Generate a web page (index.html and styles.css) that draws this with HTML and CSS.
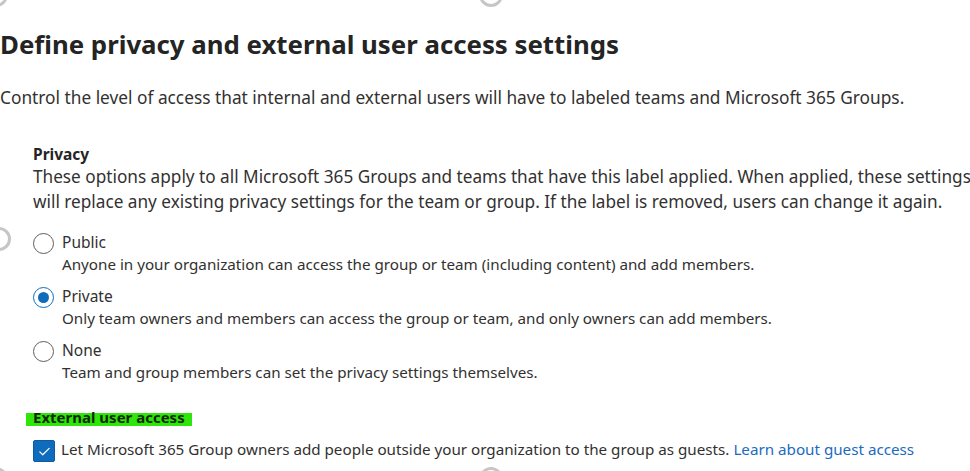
FILE: index.html
```html
<!DOCTYPE html>
<html lang="en">
<head>
<meta charset="utf-8">
<title>Define privacy and external user access settings</title>
<link rel="stylesheet" href="styles.css">
</head>
<body>
<div class="page">
  <span class="ring ring-top-left"></span>
  <span class="ring ring-top-mid"></span>
  <span class="ring ring-side"></span>
  <span class="ring ring-bottom-left"></span>
  <span class="ring ring-bottom-mid"></span>

  <h1 class="title">Define privacy and external user access settings</h1>
  <p class="intro">Control the level of access that internal and external users will have to labeled teams and Microsoft 365 Groups.</p>

  <section class="section">
    <h2 class="section-title">Privacy</h2>
    <p class="section-text">These options apply to all Microsoft 365 Groups and teams that have this label applied. When applied, these settings will replace any existing privacy settings for the team or group. If the label is removed, users can change it again.</p>

    <div class="options">
      <div class="option">
        <span class="radio"></span>
        <div class="option-body">
          <div class="option-label">Public</div>
          <div class="option-desc">Anyone in your organization can access the group or team (including content) and add members.</div>
        </div>
      </div>
      <div class="option">
        <span class="radio checked"></span>
        <div class="option-body">
          <div class="option-label">Private</div>
          <div class="option-desc">Only team owners and members can access the group or team, and only owners can add members.</div>
        </div>
      </div>
      <div class="option">
        <span class="radio"></span>
        <div class="option-body">
          <div class="option-label">None</div>
          <div class="option-desc">Team and group members can set the privacy settings themselves.</div>
        </div>
      </div>
    </div>

    <h2 class="section-title highlight">External user access</h2>
    <div class="check-row">
      <span class="checkbox">
        <svg viewBox="0 0 16 16" width="15" height="15"><path d="M3 8.4l3.1 3.1L13 4.6" fill="none" stroke="#fff" stroke-width="1.3" stroke-linecap="round" stroke-linejoin="round"/></svg>
      </span>
      <span class="check-text">Let Microsoft 365 Group owners add people outside your organization to the group as guests. <a class="link" href="#">Learn about guest access</a></span>
    </div>
  </section>
</div>
</body>
</html>
```

FILE: styles.css
```css
html, body {
  margin: 0;
  padding: 0;
  background: #ffffff;
}
body {
  width: 970px;
  height: 471px;
  overflow: hidden;
  font-family: "Noto Sans", "Open Sans", sans-serif;
  color: #323130;
}
.page {
  position: relative;
  height: 471px;
  overflow: hidden;
  padding-top: 28px;
  box-sizing: border-box;
}
.ring {
  position: absolute;
  width: 18px;
  height: 18px;
  border: 3px solid #c8c6c4;
  border-radius: 50%;
}
.ring-top-left { left: -16px; top: -17px; }
.ring-top-mid { left: 479px; top: -17px; }
.ring-side { left: -13px; top: 227px; }
.ring-bottom-left { left: -16px; top: 467px; }
.ring-bottom-mid { left: 479px; top: 467px; }

.title {
  margin: 0;
  font-size: 25.8px;
  line-height: 32px;
  font-weight: 700;
  color: #242424;
}
.intro {
  margin: 27px 0 0 0;
  font-size: 17.3px;
  line-height: 22px;
  color: #323130;
  white-space: nowrap;
}
.section {
  padding-left: 33px;
  margin-top: 34px;
}
.section-title {
  margin: 0;
  font-size: 15.5px;
  line-height: 22px;
  font-weight: 700;
  color: #242424;
}
.section-text {
  margin: -1px 0 0 0;
  font-size: 17.2px;
  line-height: 25px;
  width: 945px;
  color: #323130;
}
.options {
  margin-top: 17.5px;
  display: flex;
  flex-direction: column;
  gap: 11px;
}
.option {
  display: flex;
  align-items: flex-start;
  gap: 8px;
}
.radio {
  flex: none;
  width: 19px;
  height: 19px;
  border: 1.5px solid #605e5c;
  border-radius: 50%;
  margin-top: 1px;
  display: flex;
  align-items: center;
  justify-content: center;
}
.radio.checked {
  border-color: #0f6cbd;
}
.radio.checked::after {
  content: "";
  width: 11px;
  height: 11px;
  border-radius: 50%;
  background: #0f6cbd;
}
.option-label {
  font-size: 15.5px;
  line-height: 21px;
}
.option-desc {
  font-size: 15.2px;
  line-height: 22px;
}
.highlight {
  margin-top: 30.5px;
  display: inline-block;
  vertical-align: top;
  background: #2ee60a;
  color: #142800;
  font-size: 15px;
  margin-left: -7px;
  padding: 0 7px 4px 7px;
  line-height: 9px;
}
.check-row {
  margin-top: 14px;
  display: flex;
  align-items: flex-start;
  gap: 6px;
}
.checkbox {
  flex: none;
  width: 20px;
  height: 20px;
  border-radius: 2px;
  background: #0f6cbd;
  border: 1px solid #0c5aa0;
  display: flex;
  align-items: center;
  justify-content: center;
}
.check-text {
  margin-top: -2px;
  font-size: 15.2px;
  line-height: 22px;
  white-space: nowrap;
}
.link {
  color: #1a6bbf;
  text-decoration: none;
}
```
